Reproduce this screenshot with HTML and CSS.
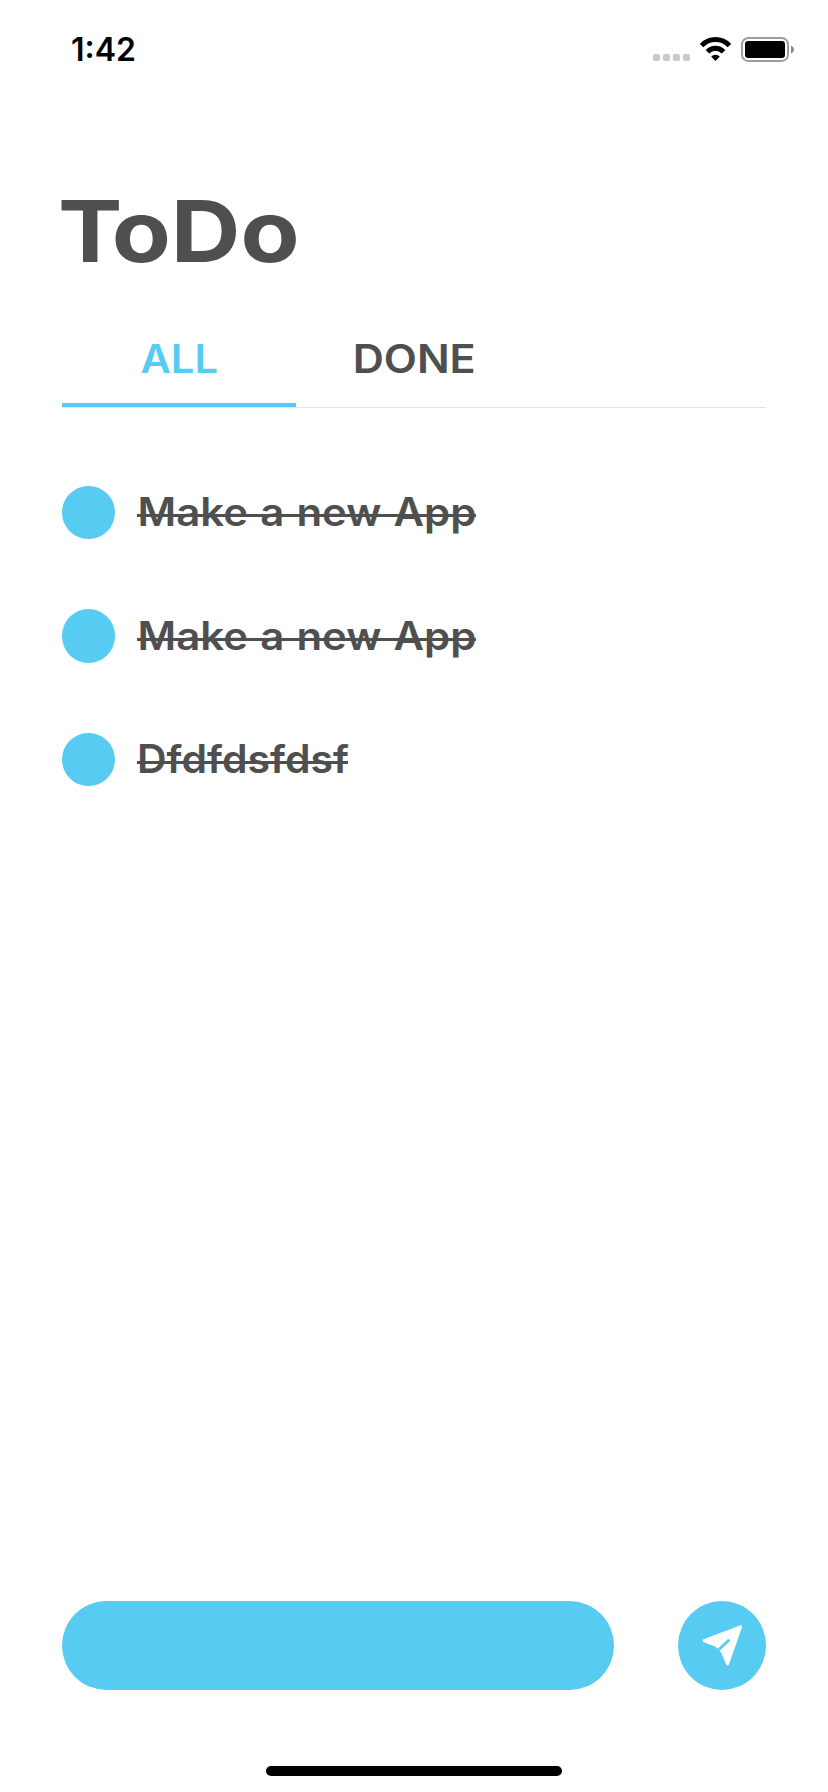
FILE: index.html
```html
<!DOCTYPE html>
<html lang="en">
<head>
<meta charset="utf-8">
<title>ToDo</title>
<link rel="stylesheet" href="styles.css">
</head>
<body>
<div class="screen">
  <header class="status">
    <span class="time">1:42</span>
    <svg class="indicators" width="144" height="28" viewBox="0 0 144 28">
      <g fill="#cacaca"><rect x="0" y="17" width="7" height="7" rx="1.8"/><rect x="10" y="17" width="7" height="7" rx="1.8"/><rect x="20" y="17" width="7" height="7" rx="1.8"/><rect x="30" y="17" width="7" height="7" rx="1.8"/></g>
      <path d="M62.5 24 L58.2 19.5 A6.3 6.3 0 0 1 66.8 19.5 Z"/>
      <path d="M54.5 14.85 A10.6 10.6 0 0 1 70.5 14.85 M48.6 8.6 A19 19 0 0 1 76.4 8.6" fill="none" stroke="#000" stroke-width="4.9"/>
      <rect x="89" y="1" width="46" height="23" rx="6.3" fill="none" stroke="#9d9d9d" stroke-width="2"/>
      <rect x="92" y="4" width="40" height="17" rx="3.2"/>
      <path d="M138 8.5 Q141 10 141 12.5 Q141 15 138 16.5 Z" fill="#858585"/>
    </svg>
  </header>
  <main class="content">
    <h1 class="title"><span>ToDo</span></h1>
    <nav class="tabs">
      <div class="tab active"><span class="all">ALL</span></div>
      <div class="tab"><span class="done">DONE</span></div>
    </nav>
    <ul class="list">
      <li class="item"><i class="dot"></i><span class="label make"><span>Make a new App</span></span></li>
      <li class="item"><i class="dot"></i><span class="label make"><span>Make a new App</span></span></li>
      <li class="item"><i class="dot"></i><span class="label short"><span>Dfdfdsfdsf</span></span></li>
    </ul>
  </main>
  <footer class="composer">
    <div class="field"></div>
    <div class="send">
      <svg width="88" height="89" viewBox="0 0 88 89" fill="#fff" stroke="#fff" stroke-width="3" stroke-linejoin="round">
        <path d="M62.5 26 L26 39.7 L41 45.5 Z"/>
        <path d="M62.5 26 L49.5 63 L44 49.5 Z"/>
        <path d="M62.5 26 L39.5 45.3 L44 50.5 Z"/>
        <path d="M39.5 50 L51.3 38.7" fill="none" stroke="#57cbf2" stroke-width="2.8"/>
      </svg>
    </div>
  </footer>
  <div class="home"></div>
</div>
</body>
</html>
```
FILE: styles.css
```css
* { box-sizing: border-box; }
body { margin: 0; background: #fff; color: #4f4f4f; font-family: Inter, "Liberation Sans", sans-serif; }
.screen { display: flex; flex-direction: column; width: 828px; height: 1792px; background: #fff; }
.status { display: flex; justify-content: space-between; align-items: flex-start; height: 88px; padding: 31px 31px 0 71px; }
.time { color: #000; font-size: 32px; font-weight: 600; line-height: 38px; }
.indicators { margin-top: 6px; }
.content { flex: 1; padding: 92px 62px 0; }
.title { margin: 0; font-size: 85px; line-height: 104px; font-weight: 700; }
.title span, .tab span, .label span { display: inline-block; transform-origin: left; white-space: nowrap; }
.title span { transform: translateX(-4px) scaleX(1.135); }
.title span::first-letter { letter-spacing: -9.5px; }
.tabs { display: flex; height: 90px; margin-top: 34px; border-bottom: 1px solid #e5e5e5; }
.tab { display: flex; justify-content: center; width: 234px; height: 89px; padding-top: 17px; font-size: 39px; line-height: 48px; font-weight: 600; }
.tab span { transform-origin: center; }
.tab .all { transform: scaleX(1.07); }
.tab .done { transform: translateX(1.5px) scaleX(1.105); }
.active { color: #57cbf2; border-bottom: 4px solid #57cbf2; }
.list { display: flex; flex-direction: column; gap: 70px; margin: 77.5px 0 0; padding: 0; list-style: none; }
.item { display: flex; align-items: center; gap: 22px; height: 53.5px; }
.dot { width: 53px; height: 53.5px; border-radius: 50%; background: #57cbf2; }
.label { position: relative; font-size: 39px; line-height: 48px; font-weight: 600; }
.label::after { content: ""; position: absolute; left: 0; top: 26px; width: 100%; height: 3px; background: #4f4f4f; }
.make { width: 339px; }
.make span { word-spacing: 1.5px; transform: translateX(.5px) scaleX(1.075); }
.short { width: 211px; }
.short span { transform: scaleX(1.05); }
.composer { display: flex; justify-content: space-between; height: 89px; padding: 0 62px; }
.field { width: 552px; border-radius: 45px; background: #57cbf2; }
.send { width: 88px; height: 89px; border-radius: 50%; background: #57cbf2; }
.home { width: 296px; height: 10px; margin: 76px auto 16px; border-radius: 5px; background: #000; }
```
